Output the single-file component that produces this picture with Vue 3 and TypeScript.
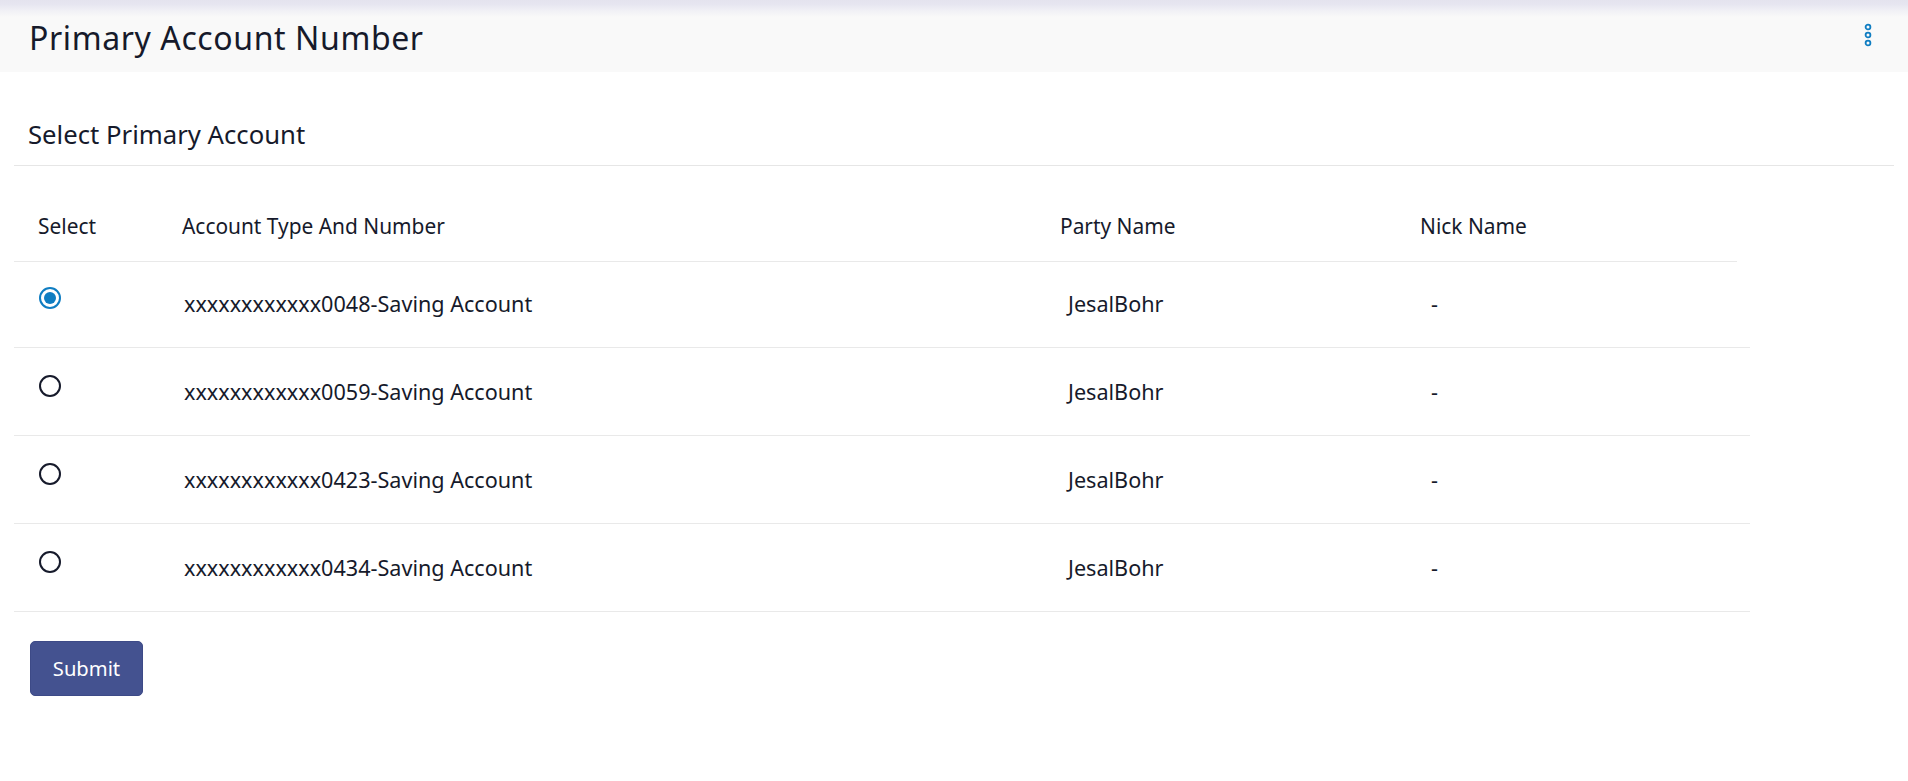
<script setup lang="ts">
interface AccountRow {
  number: string
  party: string
  nick: string
  selected: boolean
}

const rows: AccountRow[] = [
  { number: 'xxxxxxxxxxxx0048-Saving Account', party: 'JesalBohr', nick: '-', selected: true },
  { number: 'xxxxxxxxxxxx0059-Saving Account', party: 'JesalBohr', nick: '-', selected: false },
  { number: 'xxxxxxxxxxxx0423-Saving Account', party: 'JesalBohr', nick: '-', selected: false },
  { number: 'xxxxxxxxxxxx0434-Saving Account', party: 'JesalBohr', nick: '-', selected: false }
]
</script>

<template>
  <div class="page">
    <header class="page-head">
      <h1 class="page-title">Primary Account Number</h1>
      <svg class="more-icon" viewBox="0 0 8 24" aria-hidden="true">
        <circle cx="4" cy="4" r="2.4" />
        <circle cx="4" cy="12" r="2.4" />
        <circle cx="4" cy="20" r="2.4" />
      </svg>
    </header>

    <main class="content">
      <h2 class="section-title">Select Primary Account</h2>

      <div class="table">
        <div class="row head-row">
          <div class="cell-select">Select</div>
          <div>Account Type And Number</div>
          <div>Party Name</div>
          <div>Nick Name</div>
        </div>
        <div v-for="row in rows" :key="row.number" class="row body-row">
          <div class="cell-select">
            <span class="radio" :class="{ 'radio-on': row.selected }"></span>
          </div>
          <div class="cell-account">{{ row.number }}</div>
          <div class="cell-party">{{ row.party }}</div>
          <div class="cell-nick">{{ row.nick }}</div>
        </div>
      </div>

      <button class="submit" type="button">Submit</button>
    </main>
  </div>
</template>

<style scoped>
.page {
  height: 781px;
  font-family: "Noto Sans", "Open Sans", sans-serif;
  color: #161a2b;
  background: #fff;
  overflow: hidden;
}

.page-head {
  display: flex;
  align-items: center;
  justify-content: space-between;
  height: 72px;
  box-sizing: border-box;
  padding: 4px 36px 0 29px;
  background: linear-gradient(#e4e3ee 0, #e6e5f0 4px, #f1f1f6 11px, #f9f9f9 17px);
}
.page-title {
  margin: 0;
  font-size: 32px;
  font-weight: 400;
  line-height: 44px;
  letter-spacing: 0.6px;
}
.more-icon {
  width: 8px;
  height: 24px;
  margin-top: -6px;
  fill: none;
  stroke: #0f7dc2;
  stroke-width: 1.8;
}

.content {
  padding: 0 14px;
}
.section-title {
  height: 94px;
  box-sizing: border-box;
  margin: 0;
  padding: 45px 0 0 14px;
  font-size: 25.7px;
  font-weight: 400;
  line-height: 36px;
  border-bottom: 1px solid #e6e6e6;
}

.row {
  display: grid;
  grid-template-columns: 168px 878px 360px 1fr;
  box-sizing: border-box;
}
.head-row {
  width: 1723px;
  height: 96px;
  align-items: center;
  padding-top: 24px;
  font-size: 20.9px;
  border-bottom: 1px solid #e9e9e9;
}
.body-row {
  width: 1736px;
  height: 88px;
  align-items: center;
  font-size: 21.6px;
  border-bottom: 1px solid #e9e9e9;
}
.head-row + .body-row {
  height: 86px;
  padding-bottom: 2px;
}
.cell-select {
  padding-left: 24px;
}
.cell-account {
  padding-left: 2px;
}
.cell-party {
  padding-left: 8px;
}
.cell-nick {
  padding-left: 11px;
}

.radio {
  display: block;
  width: 22px;
  height: 22px;
  box-sizing: border-box;
  margin: -12px 0 0 1px;
  border: 2px solid #161a2b;
  border-radius: 50%;
}
.radio-on {
  position: relative;
  border-color: #0f7dc2;
}
.radio-on::after {
  content: "";
  position: absolute;
  inset: 3px;
  border-radius: 50%;
  background: #0f7dc2;
}

.submit {
  display: block;
  width: 113px;
  height: 55px;
  margin: 29px 0 0 16px;
  padding: 0 0 2px;
  border: 1px solid #3d4a87;
  border-radius: 5px;
  background: #445290;
  color: #fff;
  font-family: inherit;
  font-size: 20.2px;
  font-weight: 400;
}
</style>
